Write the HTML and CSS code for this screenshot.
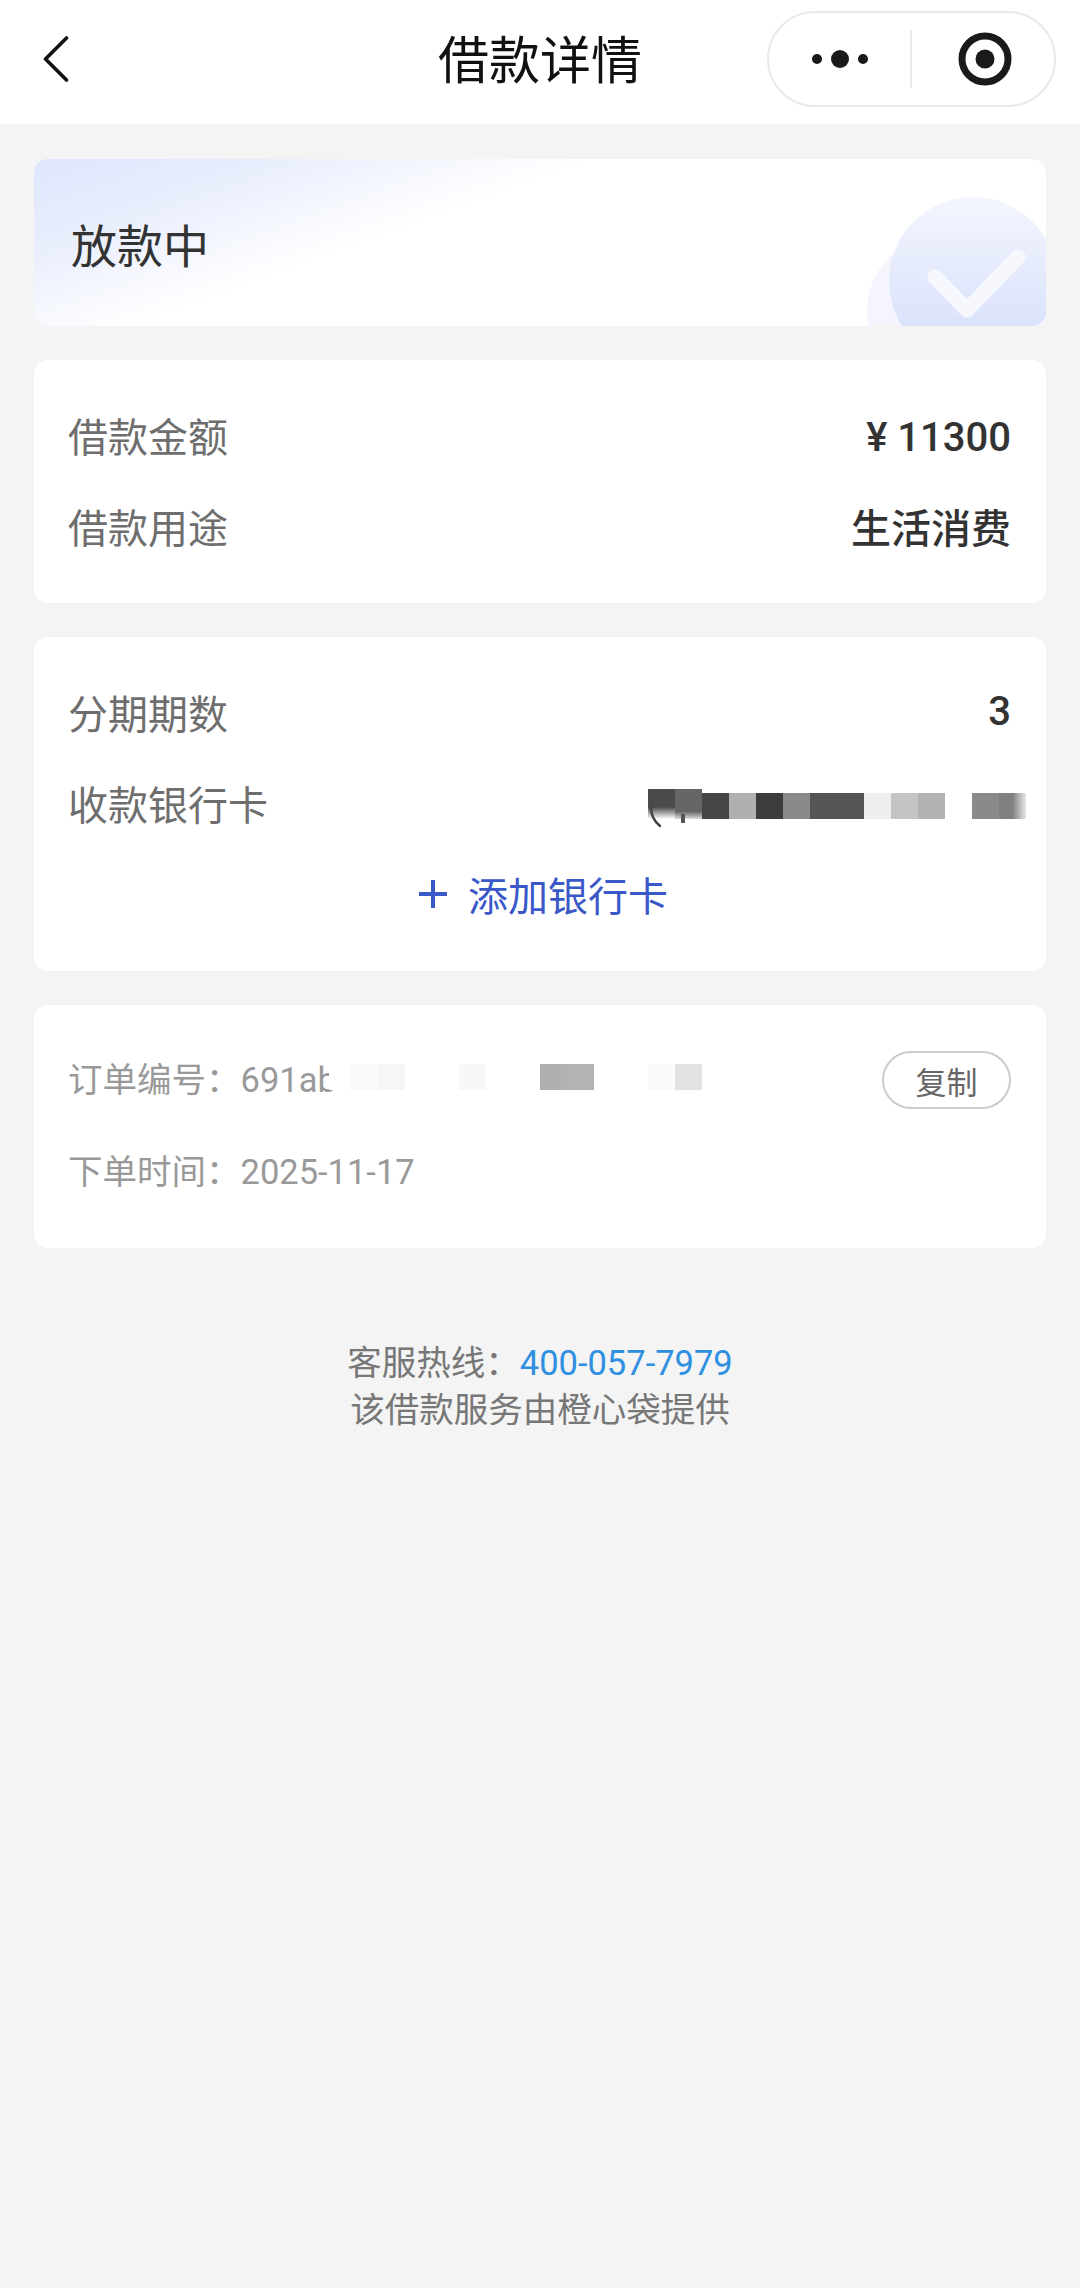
FILE: index.html
```html
<!DOCTYPE html>
<html lang="zh-CN">
<head>
    <meta charset="UTF-8">
    <meta name="viewport" content="width=device-width, initial-scale=1.0">
    <title>借款详情</title>
    <link rel="stylesheet" href="styles.css">
</head>
<body>
    <header class="nav">
        <svg class="nav-back" width="26" height="46" viewBox="0 0 26 46">
            <path d="M23.5 2 L2.5 23 L23.5 44" fill="none" stroke="#111" stroke-width="3.6" stroke-linecap="round" stroke-linejoin="round"/>
        </svg>
        <h1 class="nav-title">借款详情</h1>
        <div class="capsule">
            <svg class="capsule-more" width="56" height="20" viewBox="0 0 56 20">
                <circle cx="5" cy="10" r="5" fill="#1a1a1a"/>
                <circle cx="28" cy="10" r="9" fill="#1a1a1a"/>
                <circle cx="51" cy="10" r="5" fill="#1a1a1a"/>
            </svg>
            <span class="capsule-line"></span>
            <svg class="capsule-target" width="54" height="54" viewBox="0 0 54 54">
                <circle cx="27" cy="27" r="23" fill="none" stroke="#1a1a1a" stroke-width="7"/>
                <circle cx="27" cy="27" r="9.5" fill="#1a1a1a"/>
            </svg>
        </div>
    </header>

    <main class="content">
        <section class="card status-card">
            <span class="status-text">放款中</span>
            <svg class="status-deco" width="200" height="167" viewBox="846 159 200 167">
                <defs>
                    <linearGradient id="decoFill" x1="0" y1="0" x2="0" y2="1">
                        <stop offset="0" stop-color="#f4f6fe"/>
                        <stop offset="0.75" stop-color="#dbe3fb"/>
                    </linearGradient>
                </defs>
                <circle cx="941" cy="310" r="74" fill="#f5f6fd"/>
                <circle cx="973" cy="281" r="84" fill="url(#decoFill)"/>
                <path d="M935 277 L967 310 L1018 257" fill="none" stroke="#f7f8fe" stroke-width="15" stroke-linecap="round" stroke-linejoin="round"/>
            </svg>
        </section>

        <section class="card info-card">
            <div class="row">
                <span class="row-label">借款金额</span>
                <span class="row-value row-amount">¥ 11300</span>
            </div>
            <div class="row">
                <span class="row-label">借款用途</span>
                <span class="row-value">生活消费</span>
            </div>
        </section>

        <section class="card info-card plan-card">
            <div class="row">
                <span class="row-label">分期期数</span>
                <span class="row-value">3</span>
            </div>
            <div class="row">
                <span class="row-label">收款银行卡</span>
                <div class="mosaic bank-mosaic">
                    <i class="cell tall s1"></i><i class="cell tall s2"></i><i class="cell s3"></i><i class="cell s4"></i>
                    <i class="cell s5"></i><i class="cell s6"></i><i class="cell s7"></i><i class="cell s7"></i>
                    <i class="cell s8"></i><i class="cell s9"></i><i class="cell s10"></i><i class="cell"></i>
                    <i class="cell s6"></i><i class="cell fade"></i>
                    <svg class="mosaic-rest" width="40" height="24" viewBox="0 0 40 24">
                        <path d="M3 2 Q3 14 12 21" fill="none" stroke="#444" stroke-width="2.5" stroke-linecap="round"/>
                        <path d="M35 9 V18" fill="none" stroke="#555" stroke-width="4"/>
                    </svg>
                </div>
            </div>
            <div class="add-card">
                <svg class="add-icon" width="32" height="32" viewBox="0 0 32 32">
                    <path d="M16 2 V30 M2 16 H30" fill="none" stroke="#3a58c8" stroke-width="4"/>
                </svg>
                <span>添加银行卡</span>
            </div>
        </section>

        <section class="card order-card">
            <div class="order-row">
                <span class="order-text">订单编号<span class="colon">：</span>691ab</span>
                <div class="mosaic order-mosaic">
                    <i class="cell cover"></i>
                    <i class="cell o1"></i><i class="cell o2"></i><i class="cell"></i><i class="cell"></i>
                    <i class="cell o3"></i><i class="cell"></i><i class="cell"></i><i class="cell o4"></i>
                    <i class="cell o5"></i><i class="cell"></i><i class="cell"></i><i class="cell o1"></i>
                    <i class="cell o6"></i>
                </div>
                <button class="copy-btn">复制</button>
            </div>
            <div class="order-row">
                <span class="order-text">下单时间<span class="colon">：</span>2025-11-17</span>
            </div>
        </section>

        <footer class="foot">
            <div>客服热线<span class="colon">：</span><span class="foot-tel">400-057-7979</span></div>
            <div>该借款服务由橙心袋提供</div>
        </footer>
    </main>
</body>
</html>
```

FILE: styles.css
```css
* {
    box-sizing: border-box;
}
body {
    margin: 0;
    min-height: 2288px;
    background: #f4f4f4;
    font-family: Roboto, "Noto Sans CJK SC", sans-serif;
    color: #333;
}
.colon {
    font-family: "Noto Sans CJK TC", sans-serif;
}

/* top bar */
.nav {
    height: 124px;
    background: #fff;
    display: grid;
    grid-template-columns: 289px 1fr 289px;
    align-items: center;
    padding: 0 24px 6px;
}
.nav-back {
    margin-left: 19px;
}
.nav-title {
    margin: 6px 0 0;
    font-size: 51px;
    font-weight: 400;
    color: #111;
    line-height: 1.2;
    text-align: center;
}
.capsule {
    width: 289px;
    height: 96px;
    border: 2px solid #e9e9e9;
    border-radius: 48px;
    display: flex;
    align-items: center;
    padding-left: 43px;
}
.capsule-line {
    width: 2px;
    height: 58px;
    background: #eaeaea;
    margin: 0 46px 0 42px;
}

/* cards */
.content {
    padding: 35px 34px 0;
    display: flex;
    flex-direction: column;
    gap: 34px;
}
.card {
    background: #fff;
    border-radius: 14px;
}
.status-card {
    height: 167px;
    position: relative;
    overflow: hidden;
    display: flex;
    align-items: center;
    padding-left: 37px;
    background: linear-gradient(160deg, #dfe6fc 0%, #e9eefd 17%, #ffffff 38%);
}
.status-text {
    font-size: 46px;
    color: #333;
}
.status-deco {
    position: absolute;
    right: 0;
    top: 0;
}
.info-card {
    height: 243px;
    padding: 29px 35px 0 34px;
}
.plan-card {
    height: 334px;
}
.row {
    height: 91px;
    display: flex;
    align-items: center;
    justify-content: space-between;
}
.row-label {
    font-size: 40px;
    color: #6e6e6e;
}
.row-value {
    font-size: 40px;
    font-weight: 500;
    color: #333;
}
.row-amount {
    padding-top: 6px;
}

/* blurred-out numbers */
.mosaic {
    display: flex;
    position: relative;
}
.cell {
    display: block;
    width: 27px;
    height: 26px;
}
.bank-mosaic {
    margin: 6px -15px 0 0;
}
.tall {
    height: 30px;
    margin-top: -4px;
}
.s1 { background: linear-gradient(#4b4b4b 60%, #fff); }
.s2 { background: linear-gradient(#666 75%, #ddd); }
.s3 { background: #464646; }
.s4 { background: #b0b0b0; }
.s5 { background: #3c3c3c; }
.s6 { background: #8a8a8a; }
.s7 { background: #555; }
.s8 { background: #eee; }
.s9 { background: #c4c4c4; }
.s10 { background: #b2b2b2; }
.fade { background: linear-gradient(90deg, #808080 50%, #e8e8e8); }
.mosaic-rest {
    position: absolute;
    left: 0;
    top: 12px;
}

/* add card */
.add-card {
    height: 92px;
    padding-left: 6px;
    display: flex;
    align-items: center;
    justify-content: center;
    gap: 19px;
    font-size: 40px;
    color: #3a58c8;
}

/* order info */
.order-card {
    height: 243px;
    padding: 29px 35px 0 34px;
}
.order-row {
    height: 92px;
    display: flex;
    align-items: center;
    position: relative;
}
.order-text {
    font-size: 34.5px;
    color: #999;
    padding-bottom: 6px;
}
.order-mosaic {
    position: absolute;
    left: 261px;
    top: 30px;
}
.cover {
    width: 22px;
    background: #fff;
}
.o1 { background: #fafafa; }
.o2 { background: #f6f6f6; }
.o3 { background: #f8f8f8; }
.o4 { background: #b0b0b0; }
.o5 { background: #b4b4b4; }
.o6 { background: #e2e2e2; }
.copy-btn {
    margin-left: auto;
    width: 129px;
    height: 58px;
    padding: 0;
    background: #fff;
    border: 2px solid #ccc;
    border-radius: 29px;
    font-family: inherit;
    font-size: 31px;
    color: #666;
}

/* hotline */
.foot {
    margin-top: 55px;
    text-align: center;
    font-size: 34.5px;
    line-height: 47px;
    color: #777;
}
.foot-tel {
    color: #2f8fe0;
}
```
